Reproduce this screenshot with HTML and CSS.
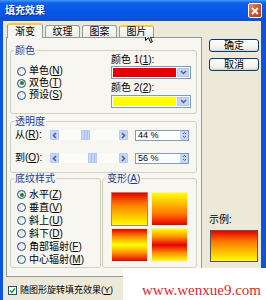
FILE: index.html
```html
<!DOCTYPE html>
<html lang="zh">
<head>
    <meta charset="UTF-8">
    <title>填充效果</title>
    <link rel="stylesheet" href="styles.css">
</head>
<body>
    <div class="window">
        <div class="titlebar">
            <span class="title">填充效果</span>
            <span class="close">
                <svg width="8" height="8" viewBox="0 0 8 8"><path d="M1 1l6 6M7 1l-6 6" stroke="#fff" stroke-width="1.8"/></svg>
            </span>
        </div>
        <div class="frame">
            <div class="main">
                <div class="tabs">
                    <div class="tab active">渐变</div>
                    <div class="tab">纹理</div>
                    <div class="tab">图案</div>
                    <div class="tab hover">图片</div>
                </div>
                <div class="panel">
                    <!-- colours -->
                    <div class="group colors">
                        <div class="col">
                            <div class="group-title">颜色</div>
                            <div class="radios">
                                <div class="radio-row"><span class="radio"></span><span>单色(<u>N</u>)</span></div>
                                <div class="radio-row"><span class="radio on"></span><span>双色(<u>T</u>)</span></div>
                                <div class="radio-row"><span class="radio"></span><span>预设(<u>S</u>)</span></div>
                            </div>
                        </div>
                        <div class="pickers">
                            <div class="pick-label">颜色 1(<u>1</u>):</div>
                            <div class="combo">
                                <span class="swatch red"></span>
                                <span class="drop"><svg width="7" height="5" viewBox="0 0 7 5"><path d="M1 1l2.5 2.5L6 1" stroke="#4d6185" stroke-width="1.5" fill="none"/></svg></span>
                            </div>
                            <div class="pick-label second">颜色 2(<u>2</u>):</div>
                            <div class="combo">
                                <span class="swatch yellow"></span>
                                <span class="drop"><svg width="7" height="5" viewBox="0 0 7 5"><path d="M1 1l2.5 2.5L6 1" stroke="#4d6185" stroke-width="1.5" fill="none"/></svg></span>
                            </div>
                        </div>
                    </div>

                    <!-- transparency -->
                    <div class="group transparency">
                        <div class="group-title">透明度</div>
                        <div class="trow">
                            <span class="tlabel">从(<u>R</u>):</span>
                            <div class="slider">
                                <span class="arrow"><svg width="5" height="7" viewBox="0 0 5 7"><path d="M4 1L1.5 3.5 4 6" stroke="#4d6185" stroke-width="1.5" fill="none"/></svg></span>
                                <span class="track"><span class="thumb" style="margin-left:22px"></span></span>
                                <span class="arrow"><svg width="5" height="7" viewBox="0 0 5 7"><path d="M1 1l2.5 2.5L1 6" stroke="#4d6185" stroke-width="1.5" fill="none"/></svg></span>
                            </div>
                            <div class="spin">
                                <span class="val">44 %</span>
                                <span class="spin-btn"><svg width="5" height="8" viewBox="0 0 5 8"><path d="M1 3l1.5-1.5L4 3M1 5l1.5 1.5L4 5" stroke="#4d6185" stroke-width="1" fill="none"/></svg></span>
                            </div>
                        </div>
                        <div class="trow second">
                            <span class="tlabel">到(<u>O</u>):</span>
                            <div class="slider">
                                <span class="arrow"><svg width="5" height="7" viewBox="0 0 5 7"><path d="M4 1L1.5 3.5 4 6" stroke="#4d6185" stroke-width="1.5" fill="none"/></svg></span>
                                <span class="track"><span class="thumb" style="margin-left:29px"></span></span>
                                <span class="arrow"><svg width="5" height="7" viewBox="0 0 5 7"><path d="M1 1l2.5 2.5L1 6" stroke="#4d6185" stroke-width="1.5" fill="none"/></svg></span>
                            </div>
                            <div class="spin">
                                <span class="val">56 %</span>
                                <span class="spin-btn"><svg width="5" height="8" viewBox="0 0 5 8"><path d="M1 3l1.5-1.5L4 3M1 5l1.5 1.5L4 5" stroke="#4d6185" stroke-width="1" fill="none"/></svg></span>
                            </div>
                        </div>
                    </div>

                    <div class="bottom">
                        <div class="group shading">
                            <div class="group-title">底纹样式</div>
                            <div class="radios">
                                <div class="radio-row tall"><span class="radio on"></span><span>水平(<u>Z</u>)</span></div>
                                <div class="radio-row tall"><span class="radio"></span><span>垂直(<u>V</u>)</span></div>
                                <div class="radio-row tall"><span class="radio"></span><span>斜上(<u>U</u>)</span></div>
                                <div class="radio-row tall"><span class="radio"></span><span>斜下(<u>D</u>)</span></div>
                                <div class="radio-row tall"><span class="radio"></span><span>角部辐射(<u>F</u>)</span></div>
                                <div class="radio-row tall"><span class="radio"></span><span>中心辐射(<u>M</u>)</span></div>
                            </div>
                        </div>
                        <div class="group variants">
                            <div class="group-title">变形(<u>A</u>)</div>
                            <div class="grid">
                                <div class="var v1 selected"></div>
                                <div class="var v2"></div>
                                <div class="var v3"></div>
                                <div class="var v4"></div>
                            </div>
                        </div>
                    </div>
                </div>
                <div class="rotate">
                    <span class="check"><svg width="7" height="7" viewBox="0 0 7 7"><path d="M1 3.5l1.8 1.8L6 1.5" stroke="#21a121" stroke-width="1.5" fill="none"/></svg></span>
                    <span>随图形旋转填充效果(<u>Y</u>)</span>
                </div>
            </div>
            <div class="side">
                <div class="btn">确定</div>
                <div class="btn">取消</div>
                <div class="sample-label">示例:</div>
                <div class="sample"></div>
            </div>
        </div>
        <div class="watermark">www.wenxue9.com</div>
        <svg class="cursor" width="10" height="16" viewBox="0 0 10 16"><path d="M0.5 0.5V12.5L3.5 9.7 5.6 14.5 7.3 13.8 5.3 9H9Z" fill="#fff" stroke="#000" stroke-width="1"/></svg>
    </div>
</body>
</html>
```

FILE: styles.css
```css
*{
    margin: 0px;
    padding: 0px;
    box-sizing: border-box;
}
body{
    font-family: "Liberation Sans", "Noto Sans CJK SC", sans-serif;
    font-size: 10px;
    line-height: 12px;
    color: #000;
    background: #fff;
}
u{
    text-decoration-thickness: 1px;
}
.window{
    position: relative;
    width: 266px;
    height: 300px;
    overflow: hidden;
    display: flex;
    flex-direction: column;
    background: #0b55de;
}
/* title bar */
.titlebar{
    height: 21px;
    flex-shrink: 0;
    display: flex;
    align-items: center;
    justify-content: space-between;
    padding: 0 4px 0 5px;
    background: linear-gradient(#4a97fb 0px, #0c62ea 3px, #0457e6 12px, #0a4fd8 21px);
    color: #fff;
}
.title{
    font-weight: bold;
    font-size: 10px;
    text-shadow: 1px 1px 0 #0a2f8c;
}
.close{
    width: 14px;
    height: 15px;
    display: flex;
    align-items: center;
    justify-content: center;
    border: 1px solid #fff;
    border-radius: 2px;
    background: linear-gradient(135deg, #eb8d6c, #d2532f 50%, #c03a17);
}
.frame{
    flex: 1;
    display: flex;
    border-left: 3px solid #0b55de;
    border-right: 5px solid #0b55de;
    background: #ece9d8;
}
.main{
    width: 196px;
    margin-left: 3px;
    display: flex;
    flex-direction: column;
}
/* tabs */
.tabs{
    display: flex;
    align-items: flex-end;
    gap: 2px;
    height: 16px;
    padding-left: 1px;
    position: relative;
    z-index: 1;
}
.tab{
    width: 35px;
    height: 12px;
    line-height: 11px;
    text-align: center;
    border: 1px solid #919b9c;
    border-bottom: none;
    border-radius: 3px 3px 0 0;
    background: linear-gradient(#fff, #ecebe6);
}
.tab.active{
    width: 36px;
    height: 15px;
    line-height: 14px;
    margin-bottom: -1px;
    background: #f7f6f1;
    border-top: 2px solid #ffc83c;
}
.tab.hover{
    border-top: 2px solid #ffc83c;
    line-height: 10px;
}
.panel{
    border: 1px solid #919b9c;
    background: #f7f6f1;
    padding-bottom: 8px;
}
/* group boxes */
.group{
    border: 1px solid #d0d0bf;
    border-radius: 3px;
}
.group-title{
    margin-top: -6px;
    width: fit-content;
    padding: 0 1px;
    margin-left: -1px;
    background: #f7f6f1;
    color: #1c3f95;
}
.colors{
    margin: 12px 4px 0 3px;
    display: flex;
    padding: 0 5px 5px 4px;
}
.radios{
    padding-left: 2px;
}
.colors .radios{
    margin-top: 8px;
}
.radio-row{
    height: 12px;
    display: flex;
    align-items: center;
    gap: 3px;
    white-space: nowrap;
}
.radio-row.tall{
    height: 13px;
}
.radio{
    width: 9px;
    height: 9px;
    flex-shrink: 0;
    border: 1px solid #1c5180;
    border-radius: 50%;
    background: linear-gradient(135deg, #dcd9cf, #fff);
    display: flex;
    align-items: center;
    justify-content: center;
}
.radio.on::after{
    content: "";
    width: 4px;
    height: 4px;
    border-radius: 50%;
    background: #2f7d2f;
}
.pickers{
    margin-left: auto;
    width: 80px;
    padding-top: 3px;
}
.pick-label{
    white-space: nowrap;
}
.combo{
    height: 13px;
    display: flex;
    border: 1px solid #7f9db9;
    background: #fff;
    padding: 1px;
    gap: 1px;
}
.combo + .pick-label.second{
    margin-top: 3px;
}
.pick-label.second + .combo{
    margin-top: 1px;
}
.swatch{
    flex: 1;
}
.swatch.red{
    background: #e80000;
}
.swatch.yellow{
    background: #ffff00;
}
.drop{
    width: 12px;
    display: flex;
    align-items: center;
    justify-content: center;
    background: #c6d5fa;
    border: 1px solid #b1c4ef;
}
/* transparency */
.transparency{
    margin: 7px 4px 0 3px;
    padding: 0 0 8px 4px;
}
.trow{
    height: 12px;
    margin-top: 1px;
    display: flex;
    align-items: center;
}
.trow.second{
    margin-top: 11px;
}
.tlabel{
    width: 35px;
    white-space: nowrap;
}
.slider{
    width: 78px;
    height: 10px;
    display: flex;
}
.arrow{
    width: 9px;
    display: flex;
    align-items: center;
    justify-content: center;
    background: #c6d5fa;
    border: 1px solid #b7c9f2;
    border-radius: 1px;
}
.track{
    flex: 1;
    background: #fbfbf8;
    display: flex;
}
.thumb{
    width: 9px;
    height: 10px;
    background: repeating-linear-gradient(90deg, #c6d5fa 0 2px, #a9bdeb 2px 3px);
    border: 1px solid #b7c9f2;
}
.spin{
    width: 54px;
    height: 11px;
    margin-left: 7px;
    display: flex;
    border: 1px solid #7f9db9;
    background: #fff;
}
.val{
    flex: 1;
    line-height: 9px;
    padding-left: 2px;
    font-size: 9px;
}
.spin-btn{
    width: 8px;
    display: flex;
    align-items: center;
    justify-content: center;
    background: #c6d5fa;
}
/* shading + variants */
.bottom{
    display: flex;
    gap: 1px;
    margin: 5px 4px 0 3px;
}
.shading{
    width: 91px;
    padding: 0 0 1px 4px;
}
.shading .radios{
    margin-top: 3px;
}
.variants{
    width: 95px;
    padding: 0 0 0 4px;
}
.grid{
    display: grid;
    grid-template-columns: 37px 37px;
    grid-template-rows: 34px 34px;
    column-gap: 3px;
    row-gap: 2px;
    margin: 7px 0 0 4px;
}
.var{
    border: 1px solid #f3efe0;
}
.var.selected{
    border-color: #9c8c6c;
}
.v1{
    background: linear-gradient(#e40000, #ff7800 35%, #ffff00);
}
.v2{
    background: linear-gradient(#ffff00, #ff7800 65%, #e40000);
}
.v3{
    background: linear-gradient(#e40000, #ff9000 25%, #ffff00 50%, #ff9000 75%, #e40000);
}
.v4{
    background: linear-gradient(#ffff00, #ff9000 25%, #e40000 50%, #ff9000 75%, #ffff00);
}
.rotate{
    height: 12px;
    margin-top: 7px;
    padding-left: 2px;
    display: flex;
    align-items: center;
    gap: 3px;
    white-space: nowrap;
    font-size: 9px;
}
.check{
    width: 9px;
    height: 9px;
    border: 1px solid #1c5180;
    background: #fff;
    display: flex;
    align-items: center;
    justify-content: center;
}
/* right side */
.side{
    width: 50px;
    margin-left: 7px;
    padding-top: 18px;
    display: flex;
    flex-direction: column;
}
.btn{
    height: 13px;
    line-height: 11px;
    text-align: center;
    border: 1px solid #003c74;
    border-radius: 3px;
    background: linear-gradient(#fff, #f0f0ea 80%, #d6d0c5);
}
.btn + .btn{
    margin-top: 6px;
}
.sample-label{
    margin-top: 143px;
}
.sample{
    margin: 4px 1px 0 1px;
    height: 32px;
    border: 1px solid #555;
    background: linear-gradient(#e40000, #ff7800 35%, #ffff00);
}
/* overlays */
.watermark{
    position: absolute;
    left: 123px;
    top: 268px;
    right: 0;
    bottom: 0;
    background: #fff;
    color: #e3242b;
    font-family: "Liberation Serif", serif;
    font-size: 15px;
    line-height: 16px;
    text-align: right;
    padding: 14px 5px 0 0;
}
.cursor{
    position: absolute;
    left: 145px;
    top: 28px;
}
```
